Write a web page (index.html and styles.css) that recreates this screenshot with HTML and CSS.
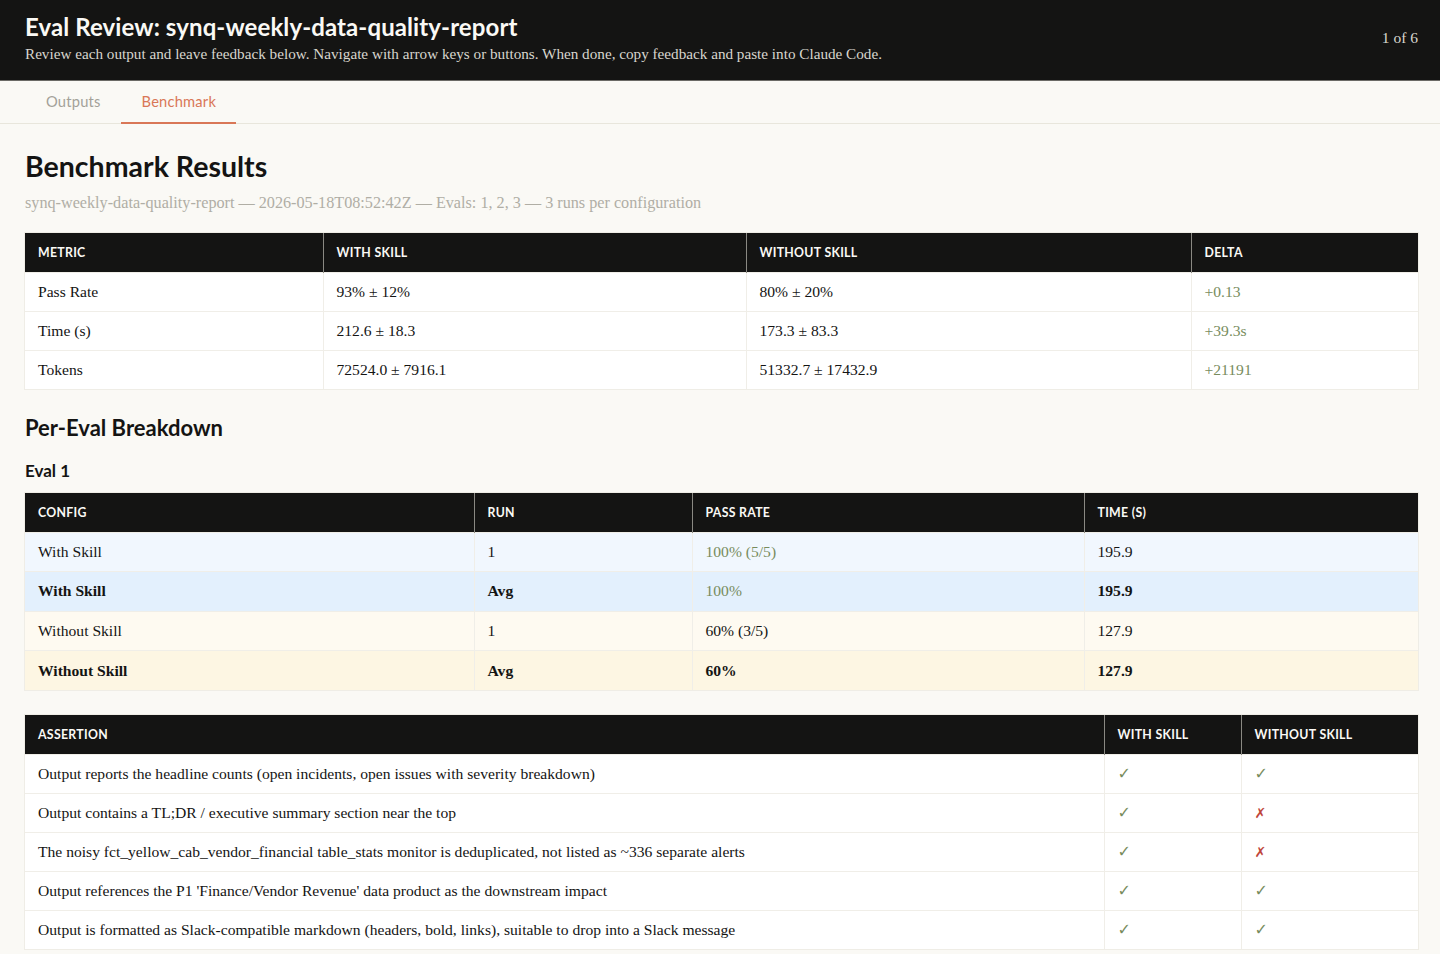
FILE: index.html
```html
<!DOCTYPE html>
<html lang="en">
    <head>
        <title>Eval Review</title>
        <link rel="stylesheet" href="styles.css">
    </head>
    <body>
        <div class="header">
            <div class="header-text">
                <h1>Eval Review: synq-weekly-data-quality-report</h1>
                <p class="instructions">Review each output and leave feedback below. Navigate with arrow keys or buttons. When done, copy feedback and paste into Claude Code.</p>
            </div>
            <div class="counter">1 of 6</div>
        </div>

        <div class="tabs">
            <div class="tab">Outputs</div>
            <div class="tab active">Benchmark</div>
        </div>

        <div class="content">
            <h2>Benchmark Results</h2>
            <p class="meta">synq-weekly-data-quality-report — 2026-05-18T08:52:42Z — Evals: 1, 2, 3 — 3 runs per configuration</p>

            <table class="summary">
                <thead>
                    <tr>
                        <th class="w-metric">Metric</th>
                        <th class="w-with">With Skill</th>
                        <th class="w-without">Without Skill</th>
                        <th>Delta</th>
                    </tr>
                </thead>
                <tbody>
                    <tr>
                        <td>Pass Rate</td>
                        <td>93% ± 12%</td>
                        <td>80% ± 20%</td>
                        <td class="good">+0.13</td>
                    </tr>
                    <tr>
                        <td>Time (s)</td>
                        <td>212.6 ± 18.3</td>
                        <td>173.3 ± 83.3</td>
                        <td class="good">+39.3s</td>
                    </tr>
                    <tr>
                        <td>Tokens</td>
                        <td>72524.0 ± 7916.1</td>
                        <td>51332.7 ± 17432.9</td>
                        <td class="good">+21191</td>
                    </tr>
                </tbody>
            </table>

            <h3>Per-Eval Breakdown</h3>
            <h4>Eval 1</h4>

            <table class="breakdown">
                <thead>
                    <tr>
                        <th class="w-config">Config</th>
                        <th class="w-run">Run</th>
                        <th class="w-pass">Pass Rate</th>
                        <th>Time (s)</th>
                    </tr>
                </thead>
                <tbody>
                    <tr class="row-with">
                        <td>With Skill</td>
                        <td>1</td>
                        <td class="good">100% (5/5)</td>
                        <td>195.9</td>
                    </tr>
                    <tr class="row-with avg">
                        <td>With Skill</td>
                        <td>Avg</td>
                        <td class="good">100%</td>
                        <td>195.9</td>
                    </tr>
                    <tr class="row-without">
                        <td>Without Skill</td>
                        <td>1</td>
                        <td>60% (3/5)</td>
                        <td>127.9</td>
                    </tr>
                    <tr class="row-without avg">
                        <td>Without Skill</td>
                        <td>Avg</td>
                        <td>60%</td>
                        <td>127.9</td>
                    </tr>
                </tbody>
            </table>

            <table class="assertions">
                <thead>
                    <tr>
                        <th>Assertion</th>
                        <th class="w-check">With Skill</th>
                        <th class="w-check2">Without Skill</th>
                    </tr>
                </thead>
                <tbody>
                    <tr>
                        <td>Output reports the headline counts (open incidents, open issues with severity breakdown)</td>
                        <td class="pass">✓</td>
                        <td class="pass">✓</td>
                    </tr>
                    <tr>
                        <td>Output contains a TL;DR / executive summary section near the top</td>
                        <td class="pass">✓</td>
                        <td class="fail">✗</td>
                    </tr>
                    <tr>
                        <td>The noisy fct_yellow_cab_vendor_financial table_stats monitor is deduplicated, not listed as ~336 separate alerts</td>
                        <td class="pass">✓</td>
                        <td class="fail">✗</td>
                    </tr>
                    <tr>
                        <td>Output references the P1 'Finance/Vendor Revenue' data product as the downstream impact</td>
                        <td class="pass">✓</td>
                        <td class="pass">✓</td>
                    </tr>
                    <tr>
                        <td>Output is formatted as Slack-compatible markdown (headers, bold, links), suitable to drop into a Slack message</td>
                        <td class="pass">✓</td>
                        <td class="pass">✓</td>
                    </tr>
                </tbody>
            </table>
        </div>
    </body>
</html>
```

FILE: styles.css
```css
*{
    margin: 0;
    padding: 0;
    box-sizing: border-box;
}

body{
    background-color: #faf9f5;
    color: #141413;
    font-family: "Liberation Serif", "DejaVu Serif", serif;
    font-size: 15px;
}

.header{
    background-color: #141413;
    color: #faf9f5;
    height: 81px;
    padding: 12px 22px 0 25px;
    display: flex;
    justify-content: space-between;
    align-items: flex-start;
    border-bottom: 1px solid #6b6a66;
}

.header h1{
    font-family: Lato, "Open Sans", sans-serif;
    font-weight: 700;
    font-size: 24px;
    letter-spacing: 0.1px;
    line-height: 29px;
}

.instructions{
    color: #d8d6ce;
    font-size: 15.2px;
    margin-top: 4px;
}

.counter{
    color: #d8d6ce;
    font-size: 15.5px;
    margin-top: 17px;
}

.tabs{
    display: flex;
    padding-left: 25px;
    height: 43px;
    border-bottom: 1px solid #e8e6dc;
}

.tab{
    font-family: Lato, "Open Sans", sans-serif;
    font-size: 14.7px;
    color: #a3a199;
    padding: 11px 20px 0 21px;
    height: 43px;
    letter-spacing: 0.2px;
}

.tab.active{
    color: #d97757;
    border-bottom: 2px solid #d97757;
}

.content{
    padding: 0 22px 40px 25px;
}

.content h2{
    font-family: Lato, "Open Sans", sans-serif;
    font-weight: 700;
    font-size: 28.5px;
    margin-top: 26px;
    line-height: 32px;
}

.meta{
    color: #b0aea5;
    font-size: 16.2px;
    margin-top: 12px;
    margin-bottom: 20px;
}

.content h3{
    font-family: Lato, "Open Sans", sans-serif;
    font-weight: 700;
    font-size: 22px;
    margin-top: 25px;
    line-height: 28px;
}

.content h4{
    font-family: Lato, "Open Sans", sans-serif;
    font-weight: 700;
    font-size: 17px;
    margin-top: 19px;
    margin-bottom: 12px;
    line-height: 20px;
}

table{
    width: 100%;
    border-collapse: collapse;
    background-color: #ffffff;
    box-shadow: 0 0 0 1px #efede6;
}

th{
    background-color: #141413;
    color: #faf9f5;
    font-family: Lato, "Open Sans", sans-serif;
    font-weight: 700;
    font-size: 12.3px;
    letter-spacing: 0.3px;
    text-transform: uppercase;
    text-align: left;
    height: 39px;
    padding: 0 13px;
    border-left: 1px solid #8a8983;
}

th:first-child{
    border-left: none;
}

td{
    height: 39px;
    padding: 0 13px;
    font-size: 15.6px;
    border-top: 1px solid #f0eee8;
    border-left: 1px solid #f0eee8;
}

td:first-child{
    border-left: none;
}

.good{
    color: #788c5d;
}

.w-metric{ width: 298px; }
.w-with{ width: 423px; }
.w-without{ width: 445px; }

.w-config{ width: 449px; }
.w-run{ width: 218px; }
.w-pass{ width: 392px; }

.breakdown td{
    height: 39.5px;
}

.row-with{
    background-color: #f1f7fe;
}

.row-with.avg{
    background-color: #e3f0fd;
}

.row-without{
    background-color: #fefaf1;
}

.row-without.avg{
    background-color: #fdf6e3;
}

.avg td{
    font-weight: 700;
}

.avg td.good{
    font-weight: 400;
}

.breakdown{
    margin-bottom: 25px;
}

.w-check{ width: 137px; }
.w-check2{ width: 177px; }

.pass{
    color: #788c5d;
    font-size: 16px;
    font-weight: 700;
    font-family: "DejaVu Sans", sans-serif;
}

.fail{
    color: #c0453a;
    font-size: 14px;
    font-weight: 700;
    font-family: "DejaVu Sans", sans-serif;
}
```
